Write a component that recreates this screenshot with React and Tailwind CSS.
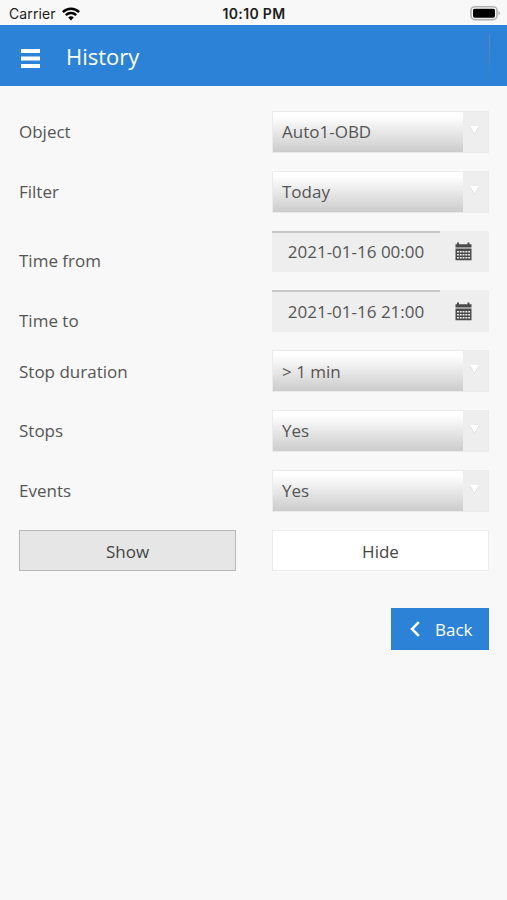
import React, { useState } from 'react'

const fields = [
  { label: 'Object', value: 'Auto1-OBD', type: 'select' },
  { label: 'Filter', value: 'Today', type: 'select' },
  { label: 'Time from', value: '2021-01-16 00:00', type: 'date' },
  { label: 'Time to', value: '2021-01-16 21:00', type: 'date' },
  { label: 'Stop duration', value: '> 1 min', type: 'select' },
  { label: 'Stops', value: 'Yes', type: 'select' },
  { label: 'Events', value: 'Yes', type: 'select' },
]

function StatusBar() {
  return (
    <div className="grid h-[25px] grid-cols-3 items-center pt-[2px] pr-[8px] pl-[9px] font-['Inter',sans-serif] text-[14px] leading-none text-[#1c1c1c]">
      <div className="flex items-center gap-[6px]">
        <span className="tracking-[0.1px]">Carrier</span>
        <svg width="18" height="14" viewBox="0 0 18 14" fill="none" stroke="#000" strokeWidth="2.4">
          <path d="M0.9 5.1a11.5 11.5 0 0 1 16.2 0" />
          <path d="M3.8 8.2a7.4 7.4 0 0 1 10.4 0" />
          <path d="M9 13.5l-2.8-2.9a4 4 0 0 1 5.6 0z" fill="#000" stroke="none" />
        </svg>
      </div>
      <span className="text-center font-semibold tracking-[0.35px] whitespace-nowrap">10:10 PM</span>
      <svg className="justify-self-end overflow-visible" width="30" height="15" viewBox="0 0 30 15">
        <rect x="2" y="0.8" width="26" height="12.8" rx="3.8" fill="#fff" stroke="#b0b0b0" strokeWidth="1.6" />
        <rect x="4" y="2.7" width="22" height="9" rx="1.6" fill="#000" />
        <path d="M29.5 5c1.8.6 1.8 3.8 0 4.4z" fill="#aaa" />
      </svg>
    </div>
  )
}

function SelectField({ value }) {
  return (
    <button className="flex h-full w-full border border-[#ebebeb] bg-[#eeeeee] text-left">
      <span className="flex h-full w-[190px] items-center bg-linear-to-b from-white from-10% to-[#cccccc] pl-[9px]">{value}</span>
      <svg className="mt-[12px] ml-[5px]" width="14" height="12" viewBox="0 0 14 12">
        <path d="M2 3h9L6.5 11z" fill="#d5d5d5" />
        <path d="M2 2h9L6.5 10z" fill="#fff" />
      </svg>
    </button>
  )
}

function CalendarIcon() {
  return (
    <svg width="17" height="19" viewBox="0 0 17 19" fill="#4a4a4a">
      <path d="M2 0.5h2v1.7h8.5V0.5h2v1.7h2v3.3H0.5V2.2H2z" />
      <path fillRule="evenodd" d="M0.5 6.5h16v11.7H0.5z M2 9v1.6h1.9V9z M4.8 9v1.6h1.9V9z M7.6 9v1.6h1.9V9z M10.4 9v1.6h1.9V9z M13.2 9v1.6h1.9V9z M2 12v1.6h1.9V12z M4.8 12v1.6h1.9V12z M7.6 12v1.6h1.9V12z M10.4 12v1.6h1.9V12z M13.2 12v1.6h1.9V12z M2 15v1.6h1.9V15z M4.8 15v1.6h1.9V15z M7.6 15v1.6h1.9V15z M10.4 15v1.6h1.9V15z M13.2 15v1.6h1.9V15z" />
    </svg>
  )
}

function DateField({ value }) {
  return (
    <div className="flex h-full w-full bg-[#eeeeee]">
      <span className="flex h-full w-[168px] items-center justify-center border-t-2 border-[#c6c6c6] pb-px whitespace-nowrap">{value}</span>
      <button className="flex flex-1 items-center justify-center pr-[2px]">
        <CalendarIcon />
      </button>
    </div>
  )
}

export default function App() {
  const [mode, setMode] = useState('show')

  const modeClass = (name) =>
    mode === name ? 'border-[#b8b8b8] bg-[#e6e6e6]' : 'border-[#ededed] bg-white'

  return (
    <div className="min-h-screen bg-[#f8f8f8] font-['Open_Sans',sans-serif] text-[17px] leading-none text-[#555555]">
      <StatusBar />
      <header className="flex h-[61px] items-center bg-[#2b82d6] pl-[21px] text-white">
        <button className="pt-[5px]">
          <svg width="19" height="19" viewBox="0 0 19 19" fill="#fff">
            <rect y="0" width="19" height="4" />
            <rect y="7.5" width="19" height="4" />
            <rect y="15" width="19" height="4" />
          </svg>
        </button>
        <h1 className="ml-[26px] text-[22px]">History</h1>
        <span className="mr-[17px] ml-auto h-[44px] w-px bg-linear-to-b from-[#5f8db8] to-[#3a7dbd]" />
      </header>

      <main className="pt-[25px] pr-[18px] pl-[19px]">
        <div className="flex flex-col gap-[18px]">
          {fields.map((f) => (
            <div key={f.label} className="grid h-[41.8px] grid-cols-[217px_217px] items-center justify-between">
              <label className={f.type === 'date' ? 'pt-[19px]' : ''}>{f.label}</label>
              {f.type === 'date' ? <DateField value={f.value} /> : <SelectField value={f.value} />}
            </div>
          ))}
          <div className="grid h-[41.8px] grid-cols-[217px_217px] justify-between text-[#444444]">
            <button onClick={() => setMode('show')} className={`border pt-[3px] ${modeClass('show')}`}>Show</button>
            <button onClick={() => setMode('hide')} className={`border pt-[3px] ${modeClass('hide')}`}>Hide</button>
          </div>
        </div>
        <div className="mt-[37px] flex justify-end">
          <button className="flex h-[42px] w-[98px] items-center bg-[#2b82d6] pl-[19px] text-white">
            <svg width="10" height="16" viewBox="0 0 10 16" fill="none" stroke="#fff" strokeWidth="2.5">
              <path d="M8.8 1.2L2 8l6.8 6.8" />
            </svg>
            <span className="ml-[15px]">Back</span>
          </button>
        </div>
      </main>
    </div>
  )
}
